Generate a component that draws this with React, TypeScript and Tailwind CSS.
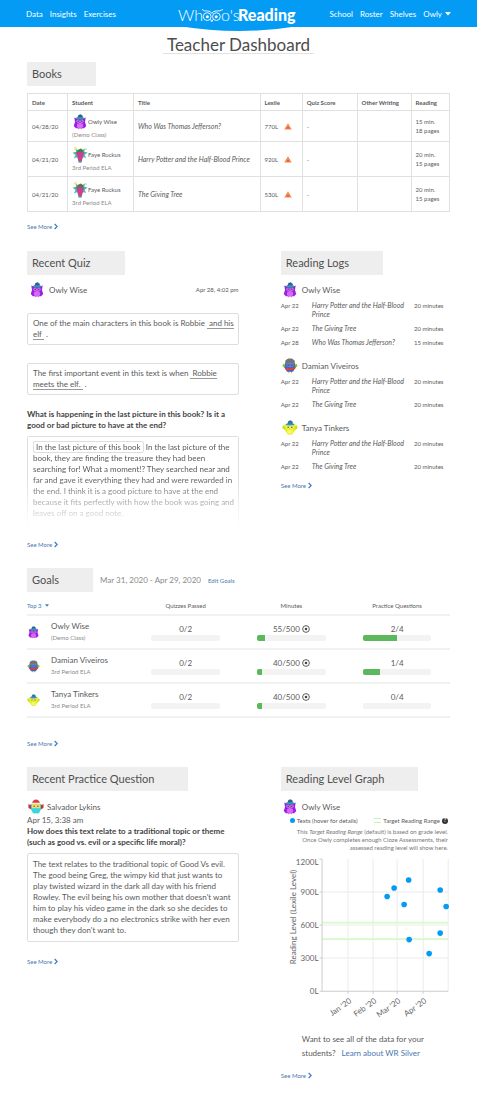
import React from "react";

type OwlKind = "owly" | "faye" | "damian" | "tanya" | "salvador";

function Eyes({ ring }: { ring: string }) {
  return (
    <>
      <circle cx="6.8" cy="8.2" r="1.9" fill={ring} />
      <circle cx="11.2" cy="8.2" r="1.9" fill={ring} />
      <circle cx="6.9" cy="8.2" r="0.8" fill="#3b3b66" />
      <circle cx="11.1" cy="8.2" r="0.8" fill="#3b3b66" />
      <path d="M8.3 9.2 H9.7 L9 10.8 Z" fill="#f3a43a" />
    </>
  );
}

function Owl({ kind, className }: { kind: OwlKind; className: string }) {
  return (
    <svg viewBox="0 0 18 18" className={className} aria-hidden="true">
      {kind === "owly" && (
        <>
          <path d="M6.4 15.8 H8.2 L7.3 17.6 Z M9.8 15.8 H11.6 L10.7 17.6 Z" fill="#f29a8a" />
          <path d="M2.6 4 L6 5.4 H12 L15.4 4 L14.6 9 L16 13.6 L13.6 16 H4.4 L2 13.6 L3.4 9 Z" fill="#9a1fe0" />
          <ellipse cx="9" cy="13.2" rx="3.6" ry="3" fill="#d668ff" />
          <Eyes ring="#c77af0" />
          <path d="M6 4.4 L7.2 1.2 L9.8 0.2 L12 2 L12.2 4.4 Z" fill="#24669c" />
          <path d="M4 5.6 L5.4 3.6 H12.8 L14.2 5.6 L9 6.2 Z" fill="#2f9aa8" />
        </>
      )}
      {kind === "faye" && (
        <>
          <path
            d="M9 5 L4 1.8 L4.6 5.4 L0.6 6.4 L4 9 L2.2 12.6 L6 11.4 L7.4 17.6 H10.8 L12 11.4 L16 12 L14 9 L17.6 6.2 L13.8 5.4 L14.6 1.8 Z"
            fill="#45b9ab"
          />
          <circle cx="3.8" cy="1.7" r="1.6" fill="#f4e77c" />
          <circle cx="15.6" cy="2.2" r="1" fill="#a8e3dc" />
          <path d="M4.4 5.6 H13.6 L12.4 10.6 L10.6 16.2 H7.8 L6 10.6 Z" fill="#d93a90" />
          <path d="M6 7.4 H8 V9.2 H6 Z M10 7.4 H12 V9.2 H10 Z" fill="#9b4fa8" />
          <path d="M5.4 6 L6.8 3 L10 1.6 L12.6 3.6 L12.6 6 Z" fill="#4f7d3a" />
        </>
      )}
      {kind === "damian" && (
        <>
          <path d="M7 15 H8.6 L7.8 17.6 Z M9.6 15 H11.2 L10.4 17.6 Z" fill="#7fb83a" />
          <path d="M5 13 L0.4 9 L1.6 6.6 L5 7.6 Z M13 13 L17.6 9 L16.4 6.6 L13 7.6 Z" fill="#7ccf2a" />
          <path d="M3.6 6 H14.4 L15 11 L12.4 15.6 H5.6 L3 11 Z" fill="#3d63c9" />
          <Eyes ring="#5f86e8" />
          <path d="M3.2 6.8 L4 2.4 L7 0.6 H11 L14 2.4 L14.8 6.8 L9 5.8 Z" fill="#747474" />
          <path d="M2.8 10.8 L9 11.8 L15.4 9.8 L14.8 12.4 L9 14 L3.8 13 Z" fill="#e2402e" />
        </>
      )}
      {kind === "tanya" && (
        <>
          <path d="M7 15 H8.6 L7.8 17.4 Z M9.6 15 H11.2 L10.4 17.4 Z" fill="#f0b45a" />
          <path d="M5 13 L0.4 9 L1 5.8 L5 7.6 Z M13 13 L17.6 9 L17 5.8 L13 7.6 Z" fill="#c3de1a" />
          <path d="M2.8 4.6 L6 6 H12 L15.2 4.6 L14.6 11.6 L11.6 16 H6.4 L3.4 11.6 Z" fill="#e3f01f" />
          <ellipse cx="9" cy="13" rx="3" ry="2.6" fill="#f5f95c" />
          <Eyes ring="#f2f77a" />
          <path d="M6 4.4 L7.2 1.2 L9.8 0.4 L12 2 L12.2 4.4 Z" fill="#2b78a6" />
          <path d="M4 5.6 L5.4 3.8 H12.8 L14.2 5.6 L9 6.2 Z" fill="#3a90b5" />
        </>
      )}
      {kind === "salvador" && (
        <>
          <path d="M7 15 H8.6 L7.8 17.6 Z M9.6 15 H11.2 L10.4 17.6 Z" fill="#f7c46a" />
          <path d="M5 12.4 L0.6 10 L0.4 6 L5 7 Z M13 12.4 L17.4 10 L17.6 6 L13 7 Z" fill="#dd2a2a" />
          <path d="M3.4 5.6 H14.6 L14.6 11.6 L12.4 16 H5.6 L3.4 11.6 Z" fill="#35d6ea" />
          <path d="M4.4 5.8 H13.6 V10.4 H4.4 Z" fill="#e9dd4a" />
          <Eyes ring="#f2ea7c" />
          <path d="M4.6 4.6 Q5.6 0.6 9 0.6 Q12.4 0.6 13.4 4.6 Z" fill="#e23b3b" />
          <rect x="4" y="4.2" width="10" height="1.5" fill="#f3ece4" />
        </>
      )}
    </svg>
  );
}

function SectionTitle({ children }: { children: React.ReactNode }) {
  return (
    <h2 className="h-6 w-max bg-[#eeeeee] pr-[34px] pl-[5px] text-[11px] leading-6 text-[#505050]">{children}</h2>
  );
}

function SeeMore() {
  return (
    <a href="#more" className="flex w-max items-center gap-[2px] text-[6px] leading-[9px] text-[#4a76b0]">
      See More
      <svg viewBox="0 0 5 8" className="h-[7px] w-1" aria-hidden="true">
        <path d="M0.8 0.8 L4 4 L0.8 7.2" fill="none" stroke="#3f7fc0" strokeWidth="1.6" />
      </svg>
    </a>
  );
}

function Logo() {
  return (
    <svg viewBox="0 0 122 20" className="relative h-5 w-[122px]" role="img" aria-label="Whooo's Reading">
      <g fill="#fff" fontFamily="Lato, sans-serif">
        <text x="0" y="14.5" fontSize="16" fontWeight="300">Wh</text>
        <text x="43" y="14.5" fontSize="16" fontWeight="300">o's</text>
        <text x="60" y="14.5" fontSize="16" fontWeight="900">Reading</text>
      </g>
      <g fill="none" stroke="#fff" strokeWidth="0.9">
        <circle cx="29.2" cy="10.6" r="3.9" />
        <circle cx="38.4" cy="10.6" r="3.9" />
        <path d="M24 3.4 Q26 5.4 29.4 5 Q32.6 4.8 33.8 7.4 Q35 4.8 38.2 5 Q42.4 5.4 45 3.4" />
        <path d="M32.6 13.4 L33.8 15.8 L35 13.4" />
      </g>
      <circle cx="29.4" cy="10.7" r="1.5" fill="#fff" />
      <circle cx="38.2" cy="10.7" r="1.5" fill="#fff" />
    </svg>
  );
}

type Book = { date: string; owl: OwlKind; name: string; group: string; title: string; lexile: string; min: string; pages: string };

const books: Book[] = [
  { date: "04/28/20", owl: "owly", name: "Owly Wise", group: "(Demo Class)", title: "Who Was Thomas Jefferson?", lexile: "770L", min: "15 min.", pages: "18 pages" },
  { date: "04/21/20", owl: "faye", name: "Faye Ruckus", group: "3rd Period ELA", title: "Harry Potter and the Half-Blood Prince", lexile: "920L", min: "20 min.", pages: "15 pages" },
  { date: "04/21/20", owl: "faye", name: "Faye Ruckus", group: "3rd Period ELA", title: "The Giving Tree", lexile: "530L", min: "20 min.", pages: "15 pages" },
];

const bookColumns = [
  { label: "Date", width: "w-[9.5%]" },
  { label: "Student", width: "w-[15.6%]" },
  { label: "Title", width: "w-[30%]" },
  { label: "Lexile", width: "w-[10%]" },
  { label: "Quiz Score", width: "w-[13%]" },
  { label: "Other Writing", width: "w-[12.8%]" },
  { label: "Reading", width: "w-[9.1%]" },
];

function BooksTable() {
  const cell = "border border-[#e0e0e0] px-1";
  return (
    <table className="w-full table-fixed border-collapse text-[6px] leading-[9px]">
      <thead>
        <tr className="h-[17px]">
          {bookColumns.map((c) => (
            <th key={c.label} className={`border border-[#e0e0e0] px-1 text-left font-bold whitespace-nowrap ${c.width}`}>
              {c.label}
            </th>
          ))}
        </tr>
      </thead>
      <tbody>
        {books.map((b, i) => (
          <tr key={i} className={i === 0 ? "h-[31px]" : "h-[35px]"}>
            <td className={cell}>{b.date}</td>
            <td className={cell}>
              <div className="flex items-center">
                <Owl kind={b.owl} className="h-4 w-4 shrink-0" />
                <span className="whitespace-nowrap">{b.name}</span>
              </div>
              <div className="whitespace-nowrap text-[#8a8a8a]">{b.group}</div>
            </td>
            <td className={`${cell} text-[7px] italic`}>{b.title}</td>
            <td className={cell}>
              <div className="flex items-center gap-[6px]">
                {b.lexile}
                <svg viewBox="0 0 8 7" className="h-[7px] w-2" aria-hidden="true">
                  <path d="M4 0.3 L7.8 6.4 H0.2 Z" fill="#f58a55" />
                  <path d="M3 4 H5 V5.8 H3 Z" fill="#e4602a" />
                </svg>
              </div>
            </td>
            <td className={cell}>-</td>
            <td className={cell}></td>
            <td className={cell}>
              {b.min}
              <br />
              {b.pages}
            </td>
          </tr>
        ))}
      </tbody>
    </table>
  );
}

type LogGroup = { owl: OwlKind; name: string; rows: [string, string, string][] };

const logs: LogGroup[] = [
  {
    owl: "owly",
    name: "Owly Wise",
    rows: [
      ["Apr 22", "Harry Potter and the Half-Blood Prince", "20 minutes"],
      ["Apr 22", "The Giving Tree", "20 minutes"],
      ["Apr 28", "Who Was Thomas Jefferson?", "15 minutes"],
    ],
  },
  {
    owl: "damian",
    name: "Damian Viveiros",
    rows: [
      ["Apr 22", "Harry Potter and the Half-Blood Prince", "20 minutes"],
      ["Apr 22", "The Giving Tree", "20 minutes"],
    ],
  },
  {
    owl: "tanya",
    name: "Tanya Tinkers",
    rows: [
      ["Apr 22", "Harry Potter and the Half-Blood Prince", "20 minutes"],
      ["Apr 22", "The Giving Tree", "20 minutes"],
    ],
  },
];

type Goal = { owl: OwlKind; name: string; group: string; quizzes: [number, number]; minutes: [number, number]; practice: [number, number] };

const goals: Goal[] = [
  { owl: "owly", name: "Owly Wise", group: "(Demo Class)", quizzes: [0, 2], minutes: [55, 500], practice: [2, 4] },
  { owl: "damian", name: "Damian Viveiros", group: "3rd Period ELA", quizzes: [0, 2], minutes: [40, 500], practice: [1, 4] },
  { owl: "tanya", name: "Tanya Tinkers", group: "3rd Period ELA", quizzes: [0, 2], minutes: [40, 500], practice: [0, 4] },
];

function Progress({ value, target }: { value: [number, number]; target?: boolean }) {
  return (
    <div className="flex flex-col items-center gap-[1px]">
      <div className="flex h-[10px] items-center gap-[2px] text-[8px] leading-[10px]">
        {value[0]}/{value[1]}
        {target && (
          <svg viewBox="0 0 10 10" className="h-2 w-2" aria-hidden="true">
            <circle cx="5" cy="5" r="4.2" fill="none" stroke="#555" strokeWidth="1.2" />
            <circle cx="5" cy="5" r="1.6" fill="#444" />
          </svg>
        )}
      </div>
      <div
        role="progressbar"
        aria-valuenow={value[0]}
        aria-valuemax={value[1]}
        className="h-[6px] w-[65%] overflow-hidden rounded-[2px] bg-[#f3f3f3]"
      >
        <div className="h-full bg-[#5cb85c]" style={{ width: `${(value[0] / value[1]) * 100}%` }} />
      </div>
    </div>
  );
}

const months: [number, string][] = [
  [67, "Jan '20"],
  [92, "Feb '20"],
  [116, "Mar '20"],
  [142, "Apr '20"],
];

const levels: [number, string][] = [
  [2, "1200L"],
  [35, "900L"],
  [68, "600L"],
  [101, "300L"],
  [134, "0L"],
];

const points: [number, number][] = [
  [106, 39.5],
  [113, 31],
  [127.5, 23],
  [123, 47.5],
  [159, 33],
  [165, 49.5],
  [128, 82.5],
  [148, 96.5],
  [159, 76],
];

function LevelChart() {
  return (
    <svg viewBox="0 0 169 166" className="mt-[5px] block w-full" role="img" aria-label="Reading level by date">
      <g stroke="#ececec" strokeWidth="1">
        {levels.slice(1, 4).map(([y]) => (
          <line key={y} x1="41" x2="167" y1={y} y2={y} />
        ))}
        {months.map(([x]) => (
          <line key={x} x1={x} x2={x} y1="2" y2="134" />
        ))}
        <line x1="167" x2="167" y1="2" y2="134" />
      </g>
      <g stroke="#d9f7ca" strokeWidth="1.8">
        <line x1="41" x2="167" y1="65.5" y2="65.5" />
        <line x1="41" x2="167" y1="82" y2="82" />
      </g>
      <g stroke="#cccccc" strokeWidth="1">
        <path d="M41 2 V134 H167" fill="none" />
        {levels.map(([y]) => (
          <line key={y} x1="38.5" x2="41" y1={y} y2={y} />
        ))}
        {months.map(([x]) => (
          <line key={x} x1={x} x2={x} y1="134" y2="136.5" />
        ))}
      </g>
      <g fill="#666" fontFamily="Lato, sans-serif" fontSize="8">
        {levels.map(([y, label]) => (
          <text key={label} x="37.5" y={y === 2 ? 8 : y + 3} textAnchor="end">
            {label}
          </text>
        ))}
        {months.map(([x, label]) => (
          <text key={label} transform={`translate(${x + 4} 145) rotate(-35)`} textAnchor="end">
            {label}
          </text>
        ))}
        <text transform="translate(15 60) rotate(-90)" textAnchor="middle">
          Reading Level (Lexile Level)
        </text>
      </g>
      {points.map(([x, y]) => (
        <circle key={`${x}-${y}`} cx={x} cy={y} r="2.8" fill="#049bf5" />
      ))}
    </svg>
  );
}

export default function App() {
  return (
    <div className="min-h-screen bg-white font-['Lato','Open_Sans',sans-serif] text-[#5a5a5a]">
      <header className="relative flex h-[27px] items-center justify-between bg-[#049bf5] px-[26px] text-[8px] leading-[10px] text-white">
        <svg viewBox="0 0 120 6" className="absolute top-[26px] left-1/2 h-[6px] w-[120px] -translate-x-1/2" aria-hidden="true">
          <path d="M0 0 Q60 10 120 0 Z" fill="#049bf5" />
        </svg>
        <nav className="flex flex-1 gap-[7px]">
          <a href="#data">Data</a>
          <a href="#insights">Insights</a>
          <a href="#exercises">Exercises</a>
        </nav>
        <a href="#home" className="relative pt-1">
          <Logo />
        </a>
        <nav className="flex flex-1 justify-end gap-[7px]">
          <a href="#school">School</a>
          <a href="#roster">Roster</a>
          <a href="#shelves">Shelves</a>
          <button type="button" className="flex items-center gap-[3px]">
            Owly
            <svg viewBox="0 0 6 4" className="h-1 w-[6px]" aria-hidden="true">
              <path d="M0 0 H6 L3 3.4 Z" fill="#fff" />
            </svg>
          </button>
        </nav>
      </header>

      <main className="px-[27px] pb-3">
        <h1 className="mx-auto w-max border-b border-[#e2e2e2] px-1 pt-[9px] text-[17px] leading-[17px] text-[#4d4d4d]">
          Teacher Dashboard
        </h1>

        <section className="mt-2">
          <SectionTitle>Books</SectionTitle>
          <div className="mt-[7px] mb-[10px]">
            <BooksTable />
          </div>
          <SeeMore />
        </section>

        <div className="mt-5 flex justify-between">
          <section className="w-1/2">
            <SectionTitle>Recent Quiz</SectionTitle>
            <div className="mt-[7px] flex items-center gap-1 pl-[2px]">
              <Owl kind="owly" className="h-4 w-4" />
              <span className="text-[8px] leading-[10px]">Owly Wise</span>
              <span className="ml-auto text-[6px] leading-[10px]">Apr 28, 4:02 pm</span>
            </div>
            <p className="mt-[15px] rounded-[2px] border border-[#dedede] py-1 pr-0 pl-[5px] text-[8px] leading-[11px]">
              One of the main characters in this book is Robbie{" "}
              <span className="border-b border-[#999] px-[2px]">and his elf</span> .
            </p>
            <p className="mt-[18px] rounded-[2px] border border-[#dedede] py-1 pr-0 pl-[5px] text-[8px] leading-[11px]">
              The first important event in this text is when{" "}
              <span className="border-b border-[#999] px-[2px]">Robbie meets the elf.</span> .
            </p>
            <h3 className="mt-[14px] text-[8px] leading-[11px] font-bold text-[#444]">
              What is happening in the last picture in this book? Is it a good or bad picture to have at the end?
            </h3>
            <div className="mt-[5px] h-[91px] overflow-hidden rounded-t-[2px] border-x border-t border-[#dedede] pt-[5px] pl-[5px] text-[8px] leading-[11px] [mask-image:linear-gradient(to_bottom,black_45%,transparent_100%)]">
              <span className="rounded-[2px] border border-[#dedede] px-[2px]">In the last picture of this book</span> In the
              last picture of the book, they are finding the treasure they had been searching for! What a moment!? They
              searched near and far and gave it everything they had and were rewarded in the end. I think it is a good
              picture to have at the end because it fits perfectly with how the book was going and leaves off on a good
              note.
            </div>
            <div className="mt-[13px]">
              <SeeMore />
            </div>
          </section>

          <section className="w-2/5">
            <SectionTitle>Reading Logs</SectionTitle>
            <div className="mt-[7px] flex flex-col gap-2">
              {logs.map((g) => (
                <div key={g.name}>
                  <div className="mb-[1px] flex items-center gap-1 pl-[1px]">
                    <Owl kind={g.owl} className="h-4 w-4" />
                    <span className="text-[8px] leading-[10px]">{g.name}</span>
                  </div>
                  {g.rows.map(([date, title, time], i) => (
                    <div key={i} className="flex pt-[2px] pb-[3px] text-[6px] leading-[9px]">
                      <span className="w-[31px] shrink-0">{date}</span>
                      <span className="flex-1 pr-1 text-[7px] italic">{title}</span>
                      <span className="w-9 shrink-0 whitespace-nowrap">{time}</span>
                    </div>
                  ))}
                </div>
              ))}
            </div>
            <div className="mt-[7px]">
              <SeeMore />
            </div>
          </section>
        </div>

        <section className="mt-[19px]">
          <div className="flex items-center gap-[7px]">
            <SectionTitle>Goals</SectionTitle>
            <span className="text-[8px] text-[#8a8a8a]">Mar 31, 2020 - Apr 29, 2020</span>
            <a href="#goals" className="text-[6px] text-[#4a76b0]">
              Edit Goals
            </a>
          </div>
          <table className="mt-[5px] mb-[21px] w-full table-fixed border-collapse">
            <thead>
              <tr className="h-[18px] border-b-2 border-[#f1f1f1] text-[6px] leading-[9px]">
                <th className="text-left font-normal text-[#4a76b0]">
                  <button type="button" className="flex items-center gap-[3px]">
                    Top 3
                    <svg viewBox="0 0 6 4" className="h-[3px] w-1" aria-hidden="true">
                      <path d="M0 0 H6 L3 4 Z" fill="#3f7fc0" />
                    </svg>
                  </button>
                </th>
                <th className="font-normal">Quizzes Passed</th>
                <th className="font-normal">Minutes</th>
                <th className="font-normal">Practice Questions</th>
              </tr>
            </thead>
            <tbody>
              {goals.map((g) => (
                <tr key={g.name} className="h-[34px] border-b-2 border-[#f1f1f1]">
                  <td>
                    <div className="flex items-center gap-[11px]">
                      <Owl kind={g.owl} className="h-[13px] w-[13px] shrink-0" />
                      <div>
                        <div className="text-[8px] leading-[11px] whitespace-nowrap">{g.name}</div>
                        <div className="text-[6px] leading-[11px] text-[#8a8a8a]">{g.group}</div>
                      </div>
                    </div>
                  </td>
                  <td>
                    <Progress value={g.quizzes} />
                  </td>
                  <td>
                    <Progress value={g.minutes} target />
                  </td>
                  <td>
                    <Progress value={g.practice} />
                  </td>
                </tr>
              ))}
            </tbody>
          </table>
          <SeeMore />
        </section>

        <div className="mt-[19px] flex justify-between">
          <section className="w-1/2">
            <SectionTitle>Recent Practice Question</SectionTitle>
            <div className="mt-2 flex items-center gap-[3px] pl-[1px]">
              <Owl kind="salvador" className="h-4 w-4" />
              <span className="text-[8px] leading-[10px]">Salvador Lykins</span>
            </div>
            <p className="text-[8px] leading-[11px]">Apr 15, 3:38 am</p>
            <h3 className="text-[8px] leading-[11px] font-bold text-[#444]">
              How does this text relate to a traditional topic or theme (such as good vs. evil or a specific life
              moral)?
            </h3>
            <p className="mt-[5px] mb-[15px] rounded-[2px] border border-[#dedede] px-[5px] py-[5px] text-[8px] leading-[11px]">
              The text relates to the traditional topic of Good Vs evil. The good being Greg, the wimpy kid that just
              wants to play twisted wizard in the dark all day with his friend Rowley. The evil being his own mother
              that doesn't want him to play his video game in the dark so she decides to make everybody do a no
              electronics strike with her even though they don't want to.
            </p>
            <SeeMore />
          </section>

          <section className="w-2/5">
            <SectionTitle>Reading Level Graph</SectionTitle>
            <div className="mt-2 flex items-center gap-1 pl-[1px]">
              <Owl kind="owly" className="h-4 w-4" />
              <span className="text-[8px] leading-[10px]">Owly Wise</span>
            </div>
            <div className="flex items-center gap-[2px] pr-[2px] pl-[9px] text-[6px] leading-[11px] whitespace-nowrap">
              <span className="h-[5px] w-[5px] rounded-full bg-[#049bf5]" />
              Texts (hover for details)
              <span className="ml-auto h-[5px] w-[7px] border-y border-[#c9f2b5]" />
              Target Reading Range
              <button
                type="button"
                aria-label="Help"
                className="flex h-[6px] w-[6px] items-center justify-center rounded-full bg-[#333] text-[5px] leading-none font-bold text-white"
              >
                ?
              </button>
            </div>
            <p className="pt-[2px] pr-[2px] pl-[10px] text-right text-[6px] leading-[8px] text-[#777]">
              This <i>Target Reading Range</i> (default) is based on grade level. Once Owly completes enough Cloze
              Assessments, their assessed reading level will show here.
            </p>
            <LevelChart />
            <p className="mt-[9px] pl-[21px] text-[8px] leading-[14px]">
              Want to see all of the data for your students?{" "}
              <a href="#silver" className="ml-1 whitespace-nowrap text-[#4a76b0]">
                Learn about WR Silver
              </a>
            </p>
            <div className="mt-[11px]">
              <SeeMore />
            </div>
          </section>
        </div>
      </main>
    </div>
  );
}
